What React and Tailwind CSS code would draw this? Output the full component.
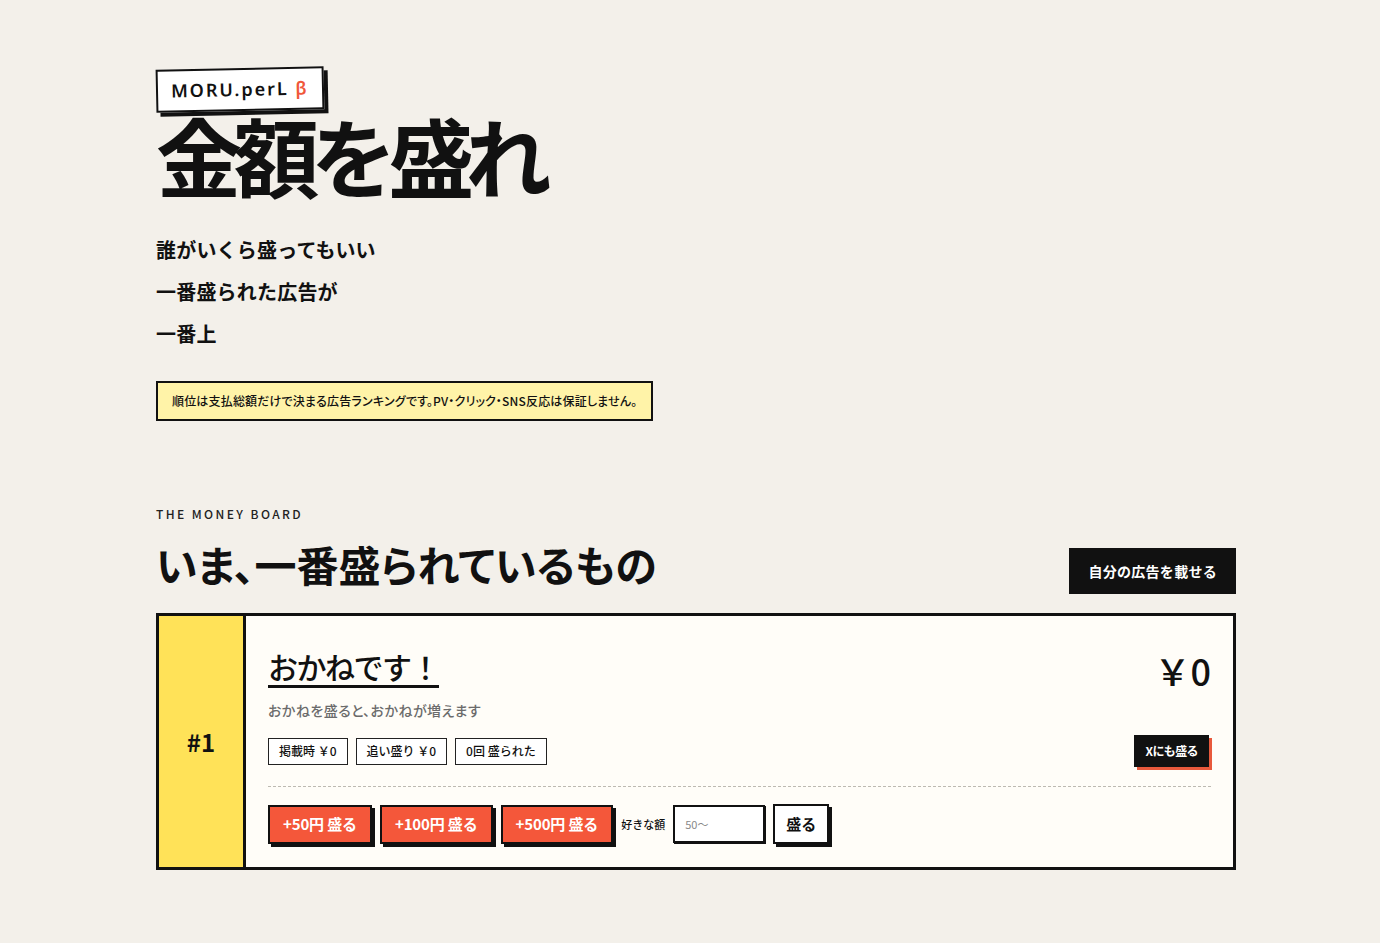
import React, { useState } from 'react';

const FONT = "font-['Noto_Sans_CJK_JP','Noto_Sans',sans-serif]";

const presets = [50, 100, 500];

const App = () => {
  const [amount, setAmount] = useState('');

  return (
    <div className={`min-h-screen bg-[#f3f0ea] text-[#111] ${FONT}`}>
      <div className="ml-[156px] w-[1080px] pt-[68px] pb-[72px]">
        {/* Hero */}
        <header>
          <div className="relative z-10 inline-block -rotate-[1.2deg] border-2 border-[#111] bg-white px-[13px] py-[6px] shadow-[4px_4px_0_#111]">
            <span className="font-['Noto_Sans',sans-serif] text-[18px] font-semibold tracking-[0.11em]">
              MORU.perL <span className="text-[#f0573a]">β</span>
            </span>
          </div>
          <h1 className="-mt-[6px] text-[86px] font-bold leading-[100px] tracking-[-0.1em]">
            金額を盛れ
          </h1>

          <div className="mt-[24px] text-[20px] font-bold leading-[42px] tracking-[0.01em]">
            <p>誰がいくら盛ってもいい</p>
            <p>一番盛られた広告が</p>
            <p>一番上</p>
          </div>

          <div className="mt-[26px] inline-flex h-[40px] items-center border-2 border-[#111] bg-[#fff3a8] px-[14px]">
            <p className="text-[12px] font-medium tracking-[0.015em] [font-feature-settings:'palt']">
              順位は支払総額だけで決まる広告ランキングです。PV・クリック・SNS反応は保証しません。
            </p>
          </div>
        </header>

        {/* Board */}
        <section className="mt-[84px]">
          <p className="text-[12px] font-medium tracking-[0.2em] text-[#222]">THE MONEY BOARD</p>
          <div className="mt-[12px] flex items-end justify-between">
            <h2 className="text-[42px] font-bold leading-[58px] [font-feature-settings:'palt']">
              いま、一番盛られているもの
            </h2>
            <button className="mb-[-1px] h-[46px] bg-[#111] px-[19px] text-[14px] font-bold tracking-[0.02em] text-white">
              自分の広告を載せる
            </button>
          </div>

          {/* Ranking card */}
          <div className="mt-[20px] flex border-[3px] border-[#111] bg-[#fffdf8]">
            <div className="flex w-[87px] shrink-0 items-center justify-center border-r-[3px] border-[#111] bg-[#ffe258]">
              <span className="text-[24px] font-bold">#1</span>
            </div>

            <div className="flex-1 px-[22px] pt-[30px] pb-[23px]">
              <div className="flex items-start justify-between">
                <div>
                  <a className="text-[30px] font-medium leading-[40px] tracking-[-0.05em] underline decoration-[3px] underline-offset-[6px]">
                    おかねです！
                  </a>
                  <p className="mt-[14px] text-[14px] font-medium tracking-[0.03em] text-[#6b6b6b] [font-feature-settings:'palt']">
                    おかねを盛ると、おかねが増えます
                  </p>
                </div>
                <p className="mt-[2px] text-[36px] font-medium leading-[44px]">￥0</p>
              </div>

              <div className="mt-[14px] flex items-center justify-between">
                <div className="flex gap-[8px]">
                  <span className="flex h-[27px] items-center border border-[#222] bg-white px-[10px] text-[12px] font-medium">掲載時 ￥0</span>
                  <span className="flex h-[27px] items-center border border-[#222] bg-white px-[10px] text-[12px] font-medium">追い盛り ￥0</span>
                  <span className="flex h-[27px] items-center border border-[#222] bg-white px-[10px] text-[12px] font-medium">0回 盛られた</span>
                </div>
                <button className="mr-[2px] h-[32px] bg-[#111] px-[11px] text-[12px] font-bold tracking-[-0.05em] text-white shadow-[3px_3px_0_#e8593c]">
                  Xにも盛る
                </button>
              </div>

              <div className="mt-[19px] border-t border-dashed border-[#bdbab2]" />

              <div className="mt-[17px] flex items-center gap-[8px]">
                {presets.map((v) => (
                  <button
                    key={v}
                    className="h-[39px] border-2 border-[#111] bg-[#f4573a] px-[13px] text-[15px] font-bold tracking-[-0.01em] text-white shadow-[3px_3px_0_#111]"
                  >
                    +{v}円 盛る
                  </button>
                ))}
                <span className="text-[11px] font-medium">好きな額</span>
                <input
                  value={amount}
                  onChange={(e) => setAmount(e.target.value)}
                  placeholder="50〜"
                  className="h-[38px] w-[92px] border-2 border-[#111] bg-white px-[10px] text-[11px] outline-none placeholder:text-[#888] shadow-[1px_1px_0_#111]"
                />
                <button className="h-[40px] w-[56px] border-2 border-[#111] bg-white text-[15px] font-bold shadow-[3px_3px_0_#111]">
                  盛る
                </button>
              </div>
            </div>
          </div>
        </section>
      </div>
    </div>
  );
};

export default App;
